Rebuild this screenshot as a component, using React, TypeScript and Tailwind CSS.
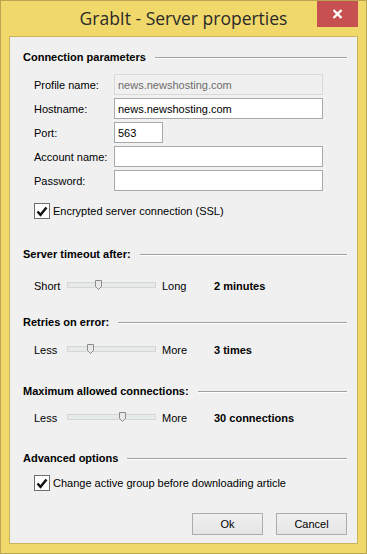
import React from "react";

const F = { fontFamily: '"Liberation Sans", Arial, sans-serif' };

function Header({ text, mt }: { text: string; mt: string }) {
  return (
    <div className={`flex items-center h-[14px] ${mt}`}>
      <span className="text-[11px] font-bold text-black leading-[14px] whitespace-nowrap">{text}</span>
      <div className="flex-1 ml-[9px] mt-[1px] border-t border-[#a0a0a0] border-b border-b-white" />
    </div>
  );
}

function Field({ label, value, disabled, w }: { label: string; value?: string; disabled?: boolean; w?: string }) {
  return (
    <div className="flex items-center h-[21px] pl-[11px]">
      <span className="w-[80px] text-[11px] text-black leading-[14px]">{label}</span>
      <div
        className={`h-[21px] ${w ?? "w-[209px]"} border flex items-center pl-[3px] text-[11px] leading-[14px] ${
          disabled ? "border-[#d9d9d9] bg-[#f0f0f0] text-[#6d6d6d]" : "border-[#a8a8a8] bg-white text-black"
        }`}
      >
        {value}
      </div>
    </div>
  );
}

function Check({ label, mt }: { label: string; mt: string }) {
  return (
    <div className={`flex items-center h-[16px] pl-[11px] ${mt}`}>
      <div className="w-[16px] h-[16px] border border-[#6f6f6f] bg-white flex items-center justify-center">
        <svg width="12" height="11" viewBox="0 0 12 11">
          <path d="M1.5 5.5 L4.5 8.8 L10.5 1.5" fill="none" stroke="#111" strokeWidth="2.4" />
        </svg>
      </div>
      <span className="ml-[3px] text-[11px] text-black leading-[14px]">{label}</span>
    </div>
  );
}

function Slider({ left, right, value, thumb, mt }: { left: string; right: string; value: string; thumb: number; mt: string }) {
  return (
    <div className={`flex items-center h-[14px] pl-[11px] ${mt}`}>
      <span className="w-[33px] text-[11px] text-black leading-[14px]">{left}</span>
      <div className="relative w-[89px] h-[6px] border border-[#d6d6d6] bg-[#e7eaea] -mt-[2px]">
        <svg
          width="7"
          height="11"
          viewBox="0 0 7 11"
          className="absolute -top-[3px]"
          style={{ left: thumb }}
        >
          <path d="M0.5 0.5 H6.5 V6.5 L3.5 9.5 L0.5 6.5 Z" fill="#e9e9e9" stroke="#8a8a8a" strokeWidth="1" />
        </svg>
      </div>
      <span className="ml-[6px] w-[52px] text-[11px] text-black leading-[14px]">{right}</span>
      <span className="text-[11px] font-bold text-black leading-[14px]">{value}</span>
    </div>
  );
}

function Btn({ text }: { text: string }) {
  return (
    <div className="w-[71px] h-[22px] border border-[#acacac] bg-gradient-to-b from-[#f0f0f0] to-[#e5e5e5] flex items-center justify-center text-[11px] text-black">
      {text}
    </div>
  );
}

export default function App() {
  return (
    <div style={F} className="w-[367px] h-[554px] bg-[#f0d86b] border border-[#b9a552] flex flex-col overflow-hidden">
      <div className="relative h-[35px] shrink-0 flex items-center justify-center">
        <span
          style={{ fontFamily: '"Open Sans", "Noto Sans", sans-serif' }}
          className="text-[17.5px] text-[#2a2a2a] -mt-[1px]"
        >
          GrabIt - Server properties
        </span>
        <div className="absolute right-[8px] top-0 w-[41px] h-[26px] bg-[#c75050] flex items-center justify-center">
          <svg width="11" height="10" viewBox="0 0 11 10">
            <path d="M1.5 1 L9.5 9 M9.5 1 L1.5 9" stroke="white" strokeWidth="2.4" />
          </svg>
        </div>
      </div>
      <div className="mx-[8px] h-[508px] shrink-0 border border-[#c9b25c] bg-[#f0f0f0] pl-[13px] pr-[10px] flex flex-col">
        <Header text="Connection parameters" mt="mt-[13px]" />
        <div className="mt-[10px] flex flex-col gap-[3px]">
          <Field label="Profile name:" value="news.newshosting.com" disabled />
          <Field label="Hostname:" value="news.newshosting.com" />
          <Field label="Port:" value="563" w="w-[49px]" />
          <Field label="Account name:" />
          <Field label="Password:" />
        </div>
        <Check label="Encrypted server connection (SSL)" mt="mt-[12px]" />
        <Header text="Server timeout after:" mt="mt-[28px]" />
        <Slider left="Short" right="Long" value="2 minutes" thumb={27} mt="mt-[18px]" />
        <Header text="Retries on error:" mt="mt-[22px]" />
        <Slider left="Less" right="More" value="3 times" thumb={19} mt="mt-[14px]" />
        <Header text="Maximum allowed connections:" mt="mt-[27px]" />
        <Slider left="Less" right="More" value="30 connections" thumb={51} mt="mt-[13px]" />
        <Header text="Advanced options" mt="mt-[26px]" />
        <Check label="Change active group before downloading article" mt="mt-[10px]" />
        <div className="mt-[22px] flex justify-end gap-[13px]">
          <Btn text="Ok" />
          <Btn text="Cancel" />
        </div>
      </div>
    </div>
  );
}
